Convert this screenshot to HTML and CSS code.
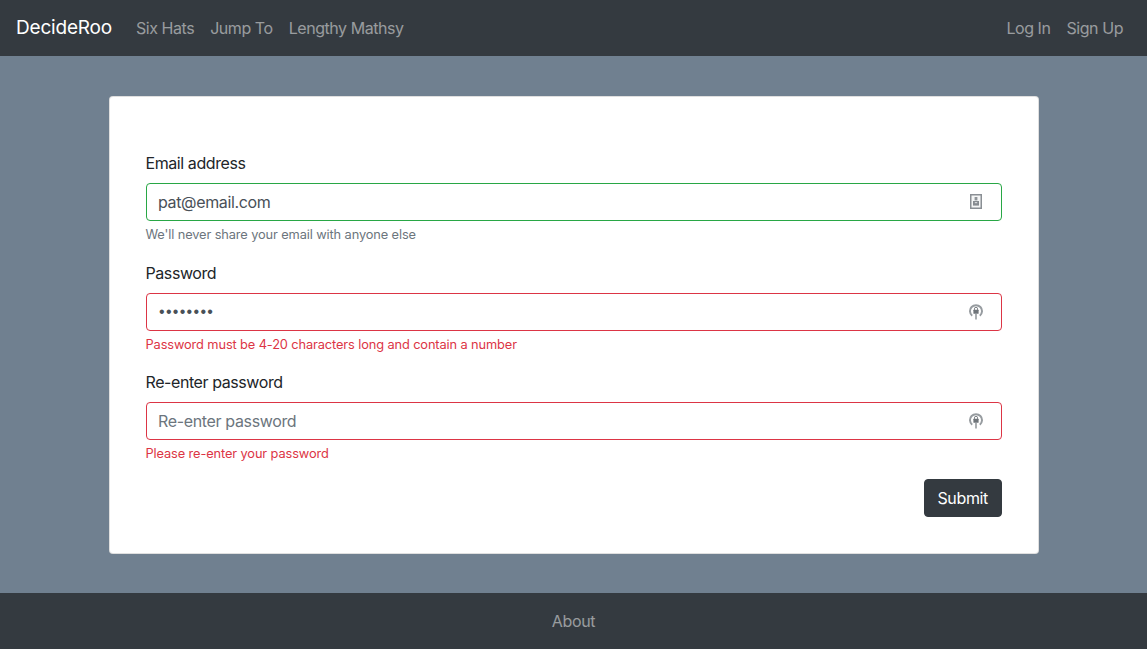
FILE: index.html
```html
<!DOCTYPE html>
<html lang="en">
<head>
<meta charset="utf-8">
<title>DecideRoo</title>
<link rel="stylesheet" href="styles.css">
</head>
<body>
<nav class="navbar">
  <a class="brand" href="#">DecideRoo</a>
  <div class="nav-links">
    <a href="#">Six Hats</a>
    <a href="#">Jump To</a>
    <a href="#">Lengthy Mathsy</a>
  </div>
  <div class="nav-links nav-right">
    <a href="#">Log In</a>
    <a href="#">Sign Up</a>
  </div>
</nav>
<main class="main">
  <form class="card">
    <div class="group">
      <label for="email">Email address</label>
      <div class="field valid">
        <input id="email" type="email" value="pat@email.com">
        <svg class="icon icon-id" viewBox="0 0 12 15" width="12" height="15"><rect x="0.75" y="0.75" width="10.5" height="13.5" fill="#f4f5f5" stroke="#8a8f94" stroke-width="1.5"/><rect x="4.6" y="3" width="2.8" height="3.4" fill="#8f9498"/><rect x="3" y="7" width="6" height="4.6" fill="#868b90"/><rect x="4.8" y="8" width="2.4" height="1.2" fill="#d5d7d9"/></svg>
      </div>
      <small class="help">We'll never share your email with anyone else</small>
    </div>
    <div class="group">
      <label for="pw">Password</label>
      <div class="field invalid">
        <input id="pw" class="dots" type="password" value="password">
        <svg class="icon icon-lock" viewBox="0 0 14 16" width="14" height="16"><path d="M3.2 11.8A6 6 0 1 1 10.8 11.8" fill="none" stroke="#979ca0" stroke-width="2"/><rect x="4.4" y="5.8" width="5.2" height="4" rx="0.5" fill="#6f7479"/><path d="M5.4 6V4.9a1.6 1.6 0 0 1 3.2 0V6" fill="none" stroke="#7b8085"/><path d="M7 10v5.5" stroke="#a3a7aa" stroke-width="1.8"/></svg>
      </div>
      <small class="error">Password must be 4-20 characters long and contain a number</small>
    </div>
    <div class="group">
      <label for="pw2">Re-enter password</label>
      <div class="field invalid">
        <input id="pw2" type="password" placeholder="Re-enter password">
        <svg class="icon icon-lock" viewBox="0 0 14 16" width="14" height="16"><path d="M3.2 11.8A6 6 0 1 1 10.8 11.8" fill="none" stroke="#979ca0" stroke-width="2"/><rect x="4.4" y="5.8" width="5.2" height="4" rx="0.5" fill="#6f7479"/><path d="M5.4 6V4.9a1.6 1.6 0 0 1 3.2 0V6" fill="none" stroke="#7b8085"/><path d="M7 10v5.5" stroke="#a3a7aa" stroke-width="1.8"/></svg>
      </div>
      <small class="error">Please re-enter your password</small>
    </div>
    <div class="actions">
      <button type="button" class="btn">Submit</button>
    </div>
  </form>
</main>
<footer class="footer"><a href="#">About</a></footer>
</body>
</html>
```

FILE: styles.css
```css
* { box-sizing: border-box; }
html, body { height: 100%; }
body {
  margin: 0;
  display: flex;
  flex-direction: column;
  font-family: Inter, "Liberation Sans", sans-serif;
  font-size: 16px;
  line-height: 1.5;
  color: #212529;
  background: #708090;
  letter-spacing: -0.3px;
}
a { text-decoration: none; }
.navbar {
  height: 56px;
  flex: none;
  display: flex;
  align-items: center;
  padding: 8px 16px;
  background: #343a40;
}
.brand { color: #fff; font-size: 19px; letter-spacing: -0.2px; margin-right: 16px; }
.nav-links { display: flex; }
.nav-links a { color: rgba(255,255,255,.5); padding: 8px; letter-spacing: -0.44px; }
.nav-right { margin-left: auto; }
.main { flex: 1; min-height: 0; padding-top: 40px; }
.card {
  width: 930px;
  margin: 0 auto;
  padding: 54.4px 36px 36px;
  background: #fff;
  border: 1px solid rgba(0,0,0,.125);
  border-radius: 4px;
}
.group { margin-bottom: 16px; }
label { display: block; margin-bottom: 8px; letter-spacing: -0.42px; }
.field { position: relative; }
.field input {
  display: block;
  width: 100%;
  height: 38px;
  padding: 6px 12px 6px 11.5px;
  font: inherit;
  letter-spacing: -0.35px;
  color: #495057;
  background: #fff;
  border: 1px solid #ced4da;
  border-radius: 4px;
  outline: 0;
}
.field input.dots {
  padding-left: 12.5px;
  font-family: "Liberation Sans", sans-serif;
  letter-spacing: 1.3px;
}
.field input::placeholder { color: #6c757d; opacity: 1; }
.valid input { border-color: #28a745; }
.invalid input { border-color: #dc3545; }
.icon { position: absolute; }
.icon-id { right: 20px; top: 11px; }
.icon-lock { right: 19px; top: 11px; }
.help, .error { display: block; margin-top: 4px; font-size: 12.8px; letter-spacing: -0.11px; }
.help { color: #6c757d; }
.error { color: #dc3545; }
.actions { display: flex; justify-content: flex-end; }
.btn {
  height: 38px;
  padding: 6px 12.5px;
  font: inherit;
  letter-spacing: -0.35px;
  color: #fff;
  background: #343a40;
  border: 1px solid #343a40;
  border-radius: 4px;
}
.footer {
  height: 56px;
  flex: none;
  display: flex;
  align-items: center;
  justify-content: center;
  background: #343a40;
}
.footer a { color: rgba(255,255,255,.5); }
```
